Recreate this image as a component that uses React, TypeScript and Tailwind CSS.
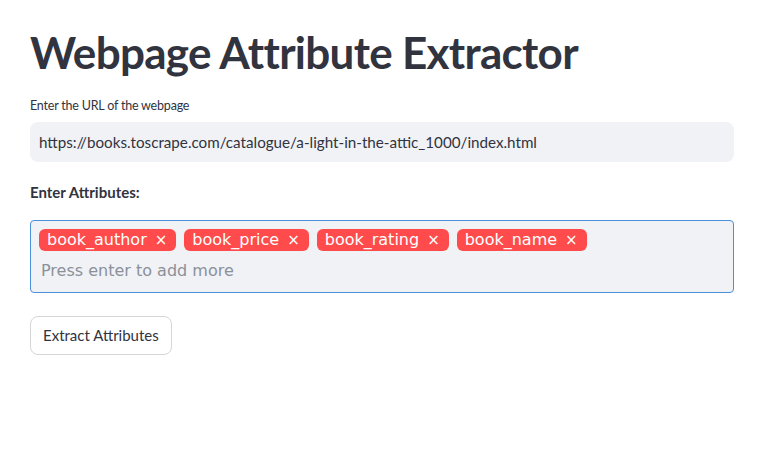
import React from "react";

const tags = ["book_author", "book_price", "book_rating", "book_name"];

export default function App() {
  return (
    <div className="min-h-[464px] w-full bg-white" style={{ fontFamily: "Lato, 'Noto Sans', sans-serif" }}>
      <div className="px-[30px] pt-[24px]" style={{ width: 764 }}>
        <h1 className="text-[44px] leading-[56px] font-bold text-[#31333f] tracking-[-0.7px]">Webpage Attribute Extractor</h1>
        <div className="mt-[17px] text-[12.5px] leading-[18px] tracking-[-0.2px] text-[#31333f]">Enter the URL of the webpage</div>
        <div className="mt-[7px] h-[40px] rounded-[8px] bg-[#f0f2f6] flex items-center px-[9px] text-[15.2px] text-[#31333f]">
          https://books.toscrape.com/catalogue/a-light-in-the-attic_1000/index.html
        </div>
        <div className="mt-[20px] text-[15px] leading-[20px] font-bold text-[#31333f]">Enter Attributes:</div>
        <div
          className="mt-[18px] h-[73px] rounded-[4px] border border-[#4a8fd9] bg-[#f0f2f6] px-[8px] pt-[8px]"
          style={{ fontFamily: "'DejaVu Sans', sans-serif" }}
        >
          <div className="flex gap-[8px]">
            {tags.map((t) => (
              <span
                key={t}
                className="h-[22px] rounded-[6px] bg-[#ff4b4b] text-white text-[16px] leading-[22px] pl-[8px] pr-[9px] flex items-center gap-[8px]"
              >
                <span>{t}</span>
                <span className="text-[15px]">×</span>
              </span>
            ))}
          </div>
          <div className="mt-[9px] ml-[2px] text-[16px] leading-[22px] text-[#8c9099]">Press enter to add more</div>
        </div>
        <button className="mt-[23px] h-[39px] px-[12px] rounded-[8px] border border-[#d6d6d9] bg-white text-[15px] text-[#31333f]">
          Extract Attributes
        </button>
      </div>
    </div>
  );
}
